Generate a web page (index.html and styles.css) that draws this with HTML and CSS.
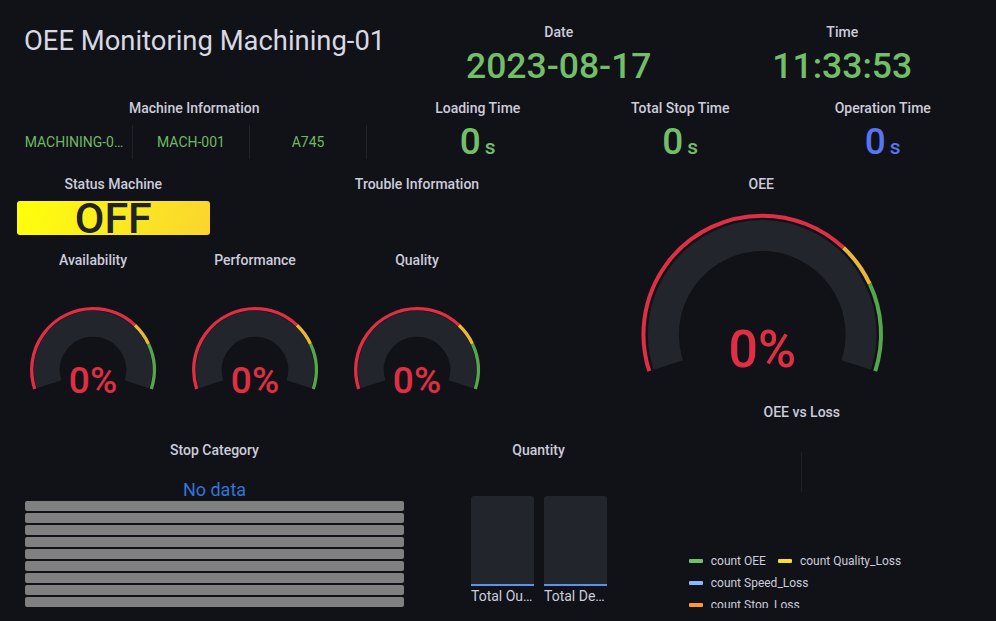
FILE: index.html
```html
<!DOCTYPE html>
<html lang="en">
<head>
<meta charset="utf-8">
<title>OEE Monitoring Machining-01</title>
<link rel="stylesheet" href="styles.css">
</head>
<body>
<main class="dashboard">
  <section class="panel p-title">
    <h1 class="dash-title">OEE Monitoring Machining-01</h1>
  </section>

  <section class="panel p-date">
    <header class="panel-title">Date</header>
    <div class="stat"><span class="stat-big green">2023-08-17</span></div>
  </section>

  <section class="panel p-time">
    <header class="panel-title">Time</header>
    <div class="stat"><span class="stat-big green">11:33:53</span></div>
  </section>

  <section class="panel p-machine">
    <header class="panel-title">Machine Information</header>
    <div class="mi-table">
      <div class="mi-cell"><span class="mi-text">MACHINING-0…</span></div>
      <div class="mi-cell"><span class="mi-text">MACH-001</span></div>
      <div class="mi-cell"><span class="mi-text">A745</span></div>
      <div class="mi-cell mi-rest"></div>
    </div>
  </section>

  <section class="panel p-loading">
    <header class="panel-title">Loading Time</header>
    <div class="stat stat-unit"><span class="num green">0</span><span class="unit green">s</span></div>
  </section>

  <section class="panel p-stop">
    <header class="panel-title">Total Stop Time</header>
    <div class="stat stat-unit"><span class="num green">0</span><span class="unit green">s</span></div>
  </section>

  <section class="panel p-oper">
    <header class="panel-title">Operation Time</header>
    <div class="stat stat-unit"><span class="num blue">0</span><span class="unit blue">s</span></div>
  </section>

  <section class="panel p-status">
    <header class="panel-title">Status Machine</header>
    <div class="status-box">OFF</div>
  </section>

  <section class="panel p-trouble">
    <header class="panel-title">Trouble Information</header>
  </section>

  <section class="panel p-oee">
    <header class="panel-title">OEE</header>
    <div class="gauge-body">
      <svg class="gauge-big" viewBox="0 0 276 188" aria-label="OEE gauge">
        <path class="band" d="M44.35 165.09 A99 99 0 1 1 232.65 165.09" stroke-width="31"/>
        <path class="ring red" d="M25.32 171.27 A119 119 0 1 1 251.68 171.27" pathLength="100" stroke-width="4" stroke-dasharray="70 200"/>
        <path class="ring yellow" d="M25.32 171.27 A119 119 0 1 1 251.68 171.27" pathLength="100" stroke-width="4" stroke-dasharray="10 200" stroke-dashoffset="-70"/>
        <path class="ring green-s" d="M25.32 171.27 A119 119 0 1 1 251.68 171.27" pathLength="100" stroke-width="4" stroke-dasharray="20 200" stroke-dashoffset="-80"/>
        <text class="gauge-val big" x="138.5" y="167">0%</text>
      </svg>
    </div>
  </section>

  <section class="panel p-avail">
    <header class="panel-title">Availability</header>
    <div class="gauge-body">
      <svg class="gauge-small" viewBox="0 0 154 150" aria-label="Availability gauge">
        <path class="band" d="M33.06 108.28 A46.2 46.2 0 1 1 120.94 108.28" stroke-width="26"/>
        <path class="ring red" d="M18.70 112.94 A61.3 61.3 0 1 1 135.30 112.94" pathLength="100" stroke-width="3.3" stroke-dasharray="70 200"/>
        <path class="ring yellow" d="M18.70 112.94 A61.3 61.3 0 1 1 135.30 112.94" pathLength="100" stroke-width="3.3" stroke-dasharray="10 200" stroke-dashoffset="-70"/>
        <path class="ring green-s" d="M18.70 112.94 A61.3 61.3 0 1 1 135.30 112.94" pathLength="100" stroke-width="3.3" stroke-dasharray="20 200" stroke-dashoffset="-80"/>
        <text class="gauge-val small" x="77" y="117">0%</text>
      </svg>
    </div>
  </section>

  <section class="panel p-perf">
    <header class="panel-title">Performance</header>
    <div class="gauge-body">
      <svg class="gauge-small" viewBox="0 0 154 150" aria-label="Performance gauge">
        <path class="band" d="M33.06 108.28 A46.2 46.2 0 1 1 120.94 108.28" stroke-width="26"/>
        <path class="ring red" d="M18.70 112.94 A61.3 61.3 0 1 1 135.30 112.94" pathLength="100" stroke-width="3.3" stroke-dasharray="70 200"/>
        <path class="ring yellow" d="M18.70 112.94 A61.3 61.3 0 1 1 135.30 112.94" pathLength="100" stroke-width="3.3" stroke-dasharray="10 200" stroke-dashoffset="-70"/>
        <path class="ring green-s" d="M18.70 112.94 A61.3 61.3 0 1 1 135.30 112.94" pathLength="100" stroke-width="3.3" stroke-dasharray="20 200" stroke-dashoffset="-80"/>
        <text class="gauge-val small" x="77" y="117">0%</text>
      </svg>
    </div>
  </section>

  <section class="panel p-qual">
    <header class="panel-title">Quality</header>
    <div class="gauge-body">
      <svg class="gauge-small" viewBox="0 0 154 150" aria-label="Quality gauge">
        <path class="band" d="M33.06 108.28 A46.2 46.2 0 1 1 120.94 108.28" stroke-width="26"/>
        <path class="ring red" d="M18.70 112.94 A61.3 61.3 0 1 1 135.30 112.94" pathLength="100" stroke-width="3.3" stroke-dasharray="70 200"/>
        <path class="ring yellow" d="M18.70 112.94 A61.3 61.3 0 1 1 135.30 112.94" pathLength="100" stroke-width="3.3" stroke-dasharray="10 200" stroke-dashoffset="-70"/>
        <path class="ring green-s" d="M18.70 112.94 A61.3 61.3 0 1 1 135.30 112.94" pathLength="100" stroke-width="3.3" stroke-dasharray="20 200" stroke-dashoffset="-80"/>
        <text class="gauge-val small" x="77" y="117">0%</text>
      </svg>
    </div>
  </section>

  <section class="panel p-loss">
    <header class="panel-title">OEE vs Loss</header>
    <div class="pie-area"><div class="pie-line"></div></div>
    <ul class="legend">
      <li class="legend-item"><i class="mark m-green"></i>count OEE</li>
      <li class="legend-item"><i class="mark m-yellow"></i>count Quality_Loss</li>
      <li class="legend-item"><i class="mark m-lblue"></i>count Speed_Loss</li>
      <li class="legend-item"><i class="mark m-orange"></i>count Stop_Loss</li>
    </ul>
  </section>

  <section class="panel p-category">
    <header class="panel-title">Stop Category</header>
    <div class="cat-body">
      <div class="nodata">No data</div>
      <div class="hbars">
        <div class="hbar"></div><div class="hbar"></div><div class="hbar"></div>
        <div class="hbar"></div><div class="hbar"></div><div class="hbar"></div>
        <div class="hbar"></div><div class="hbar"></div><div class="hbar"></div>
      </div>
    </div>
  </section>

  <section class="panel p-qty">
    <header class="panel-title">Quantity</header>
    <div class="qty-body">
      <div class="qcol"><div class="qbar"></div><div class="qlabel">Total Output</div></div>
      <div class="qcol"><div class="qbar"></div><div class="qlabel">Total Defect</div></div>
    </div>
  </section>
</main>
</body>
</html>
```
FILE: styles.css
```css
* { box-sizing: border-box; margin: 0; padding: 0; }

html, body {
  height: 100%;
  overflow: hidden;
  background: #111217;
}

body {
  font-family: Roboto, "Liberation Sans", Arial, sans-serif;
  color: #ccccdc;
}

.dashboard {
  width: 996px;
  display: grid;
  grid-template-columns: repeat(24, 1fr);
  grid-auto-rows: 30px;
  gap: 8px;
  padding: 16px;
}

.panel {
  display: flex;
  flex-direction: column;
  min-width: 0;
  min-height: 0;
}

.panel-title {
  height: 32px;
  line-height: 32px;
  flex-shrink: 0;
  text-align: center;
  font-size: 14px;
  font-weight: 500;
  color: #ccccdc;
  white-space: nowrap;
}

/* grid placement */
.p-title    { grid-column: 1 / span 10;  grid-row: 1 / span 2; }
.p-date     { grid-column: 11 / span 7;  grid-row: 1 / span 2; }
.p-time     { grid-column: 18 / span 7;  grid-row: 1 / span 2; }
.p-machine  { grid-column: 1 / span 9;   grid-row: 3 / span 2; }
.p-loading  { grid-column: 10 / span 5;  grid-row: 3 / span 2; }
.p-stop     { grid-column: 15 / span 5;  grid-row: 3 / span 2; }
.p-oper     { grid-column: 20 / span 5;  grid-row: 3 / span 2; }
.p-status   { grid-column: 1 / span 5;   grid-row: 5 / span 2; }
.p-trouble  { grid-column: 6 / span 10;  grid-row: 5 / span 2; }
.p-oee      { grid-column: 16 / span 7;  grid-row: 5 / span 6; }
.p-avail    { grid-column: 1 / span 4;   grid-row: 7 / span 5; }
.p-perf     { grid-column: 5 / span 4;   grid-row: 7 / span 5; }
.p-qual     { grid-column: 9 / span 4;   grid-row: 7 / span 5; }
.p-loss     { grid-column: 16 / span 9;  grid-row: 11 / span 6; }
.p-category { grid-column: 1 / span 10;  grid-row: 12 / span 5; }
.p-qty      { grid-column: 11 / span 6;  grid-row: 12 / span 5; }

/* dashboard title */
.p-title { padding: 9px 8px; }
.dash-title {
  font-size: 27.4px;
  font-weight: 400;
  line-height: 32px;
  color: #d8d9e3;
  white-space: nowrap;
}

/* stat panels */
.stat {
  height: 36px;
  display: flex;
  align-items: center;
  justify-content: center;
}
.stat-big {
  font-size: 35.5px;
  font-weight: 500;
  line-height: normal;
}
.stat-unit { align-items: baseline; }
.num {
  font-size: 37px;
  font-weight: 500;
  line-height: 36px;
}
.unit {
  font-size: 21px;
  font-weight: 500;
  line-height: 36px;
  margin-left: 4px;
}
.green { color: #73bf69; }
.blue  { color: #5a73f2; }

/* machine info table */
.mi-table {
  display: flex;
  height: 34px;
  margin-top: 1px;
}
.mi-cell {
  width: 117px;
  flex-shrink: 0;
  border-right: 1px solid #202226;
  padding: 0 6px;
  display: flex;
  align-items: center;
  justify-content: center;
  overflow: hidden;
}
.mi-rest { flex: 1; width: auto; border-right: none; }
.mi-text {
  font-size: 14px;
  color: #6fb865;
  white-space: nowrap;
  overflow: hidden;
  text-overflow: ellipsis;
  max-width: 100%;
}

/* status */
.status-box {
  margin: 1px 1px 0;
  height: 34px;
  border-radius: 3px;
  background: linear-gradient(110deg, #ffff0a 0%, #fbeb1f 50%, #fbd42f 100%);
  color: #202226;
  font-size: 43px;
  font-weight: 500;
  line-height: 34px;
  text-align: center;
}

/* gauges */
.gauge-body {
  flex: 1;
  display: flex;
  justify-content: center;
}
.gauge-small { width: 154px; height: 150px; display: block; }
.gauge-big { width: 100%; height: 188px; display: block; }
.band { fill: none; stroke: #22252b; }
.ring { fill: none; }
.ring.red { stroke: #e02f44; }
.ring.yellow { stroke: #eab839; }
.ring.green-s { stroke: #56a64b; }
.gauge-val {
  fill: #e02f44;
  text-anchor: middle;
  font-family: Roboto, "Liberation Sans", Arial, sans-serif;
  font-weight: 500;
}
.gauge-val.small { font-size: 37px; }
.gauge-val.big { font-size: 52px; }

/* OEE vs Loss */
.p-loss { padding-bottom: 8px; }
.pie-area { flex: 1; min-height: 0; }
.pie-line {
  width: 1px;
  height: 40px;
  margin: 24px auto 0;
  background: #1d1f24;
}
.legend {
  list-style: none;
  flex-shrink: 0;
  height: 58px;
  overflow: hidden;
  width: 226px;
  margin: 0 auto;
  display: flex;
  flex-wrap: wrap;
  column-gap: 12px;
  align-content: flex-start;
}
.legend-item {
  display: flex;
  align-items: center;
  height: 22px;
  font-size: 12px;
  color: #ccccdc;
  white-space: nowrap;
}
.mark {
  display: block;
  width: 14px;
  height: 4px;
  border-radius: 1px;
  margin-right: 8px;
}
.m-green  { background: #73bf69; }
.m-yellow { background: #fade2a; }
.m-lblue  { background: #8ab8ff; }
.m-orange { background: #ff9830; }

/* stop category */
.cat-body {
  padding: 13px 9px 0;
  display: flex;
  flex-direction: column;
}
.nodata {
  font-size: 18px;
  line-height: 22px;
  text-align: center;
  color: #3274d9;
}
.hbars {
  display: flex;
  flex-direction: column;
  gap: 2px;
}
.hbar {
  height: 10px;
  background: #808080;
  border-radius: 2px;
}

/* quantity */
.qty-body {
  padding: 30px 0 0 50px;
  display: flex;
  gap: 10px;
}
.qcol {
  width: 63px;
  display: flex;
  flex-direction: column;
}
.qbar {
  height: 90px;
  background: #22252b;
  border-radius: 3px 3px 0 0;
  border-bottom: 2px solid #5794f2;
}
.qlabel {
  margin-top: 1px;
  font-size: 14px;
  line-height: 18px;
  color: #ccccdc;
  white-space: nowrap;
  overflow: hidden;
  text-overflow: ellipsis;
}
```
